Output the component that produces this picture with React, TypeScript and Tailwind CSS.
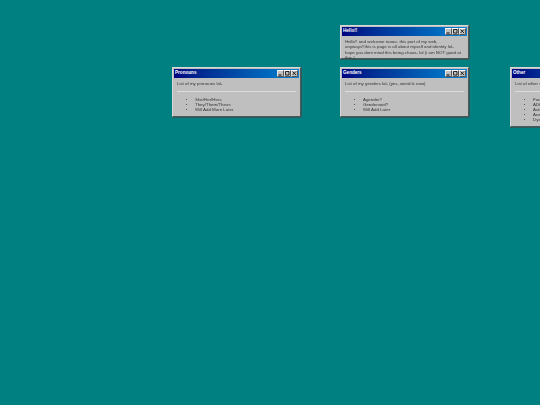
const font = { fontFamily: '"Liberation Sans", Arial, sans-serif' }

function Win({ title, className, children }: { title: string; className: string; children: React.ReactNode }) {
  return (
    <div
      style={font}
      className={`absolute bg-[#bfbfbf] border border-t-[#d8d8d8] border-l-[#d8d8d8] border-r-[#4a5a5a] border-b-[#4a5a5a] p-px shadow-[0_1px_0_#2c5c5c,1px_0_0_#2c5c5c] blur-[0.3px] ${className}`}
    >
      <div className="flex h-[9px] items-center justify-between bg-gradient-to-r from-[#000080] to-[#1084d0] pl-px pr-px">
        <span className="text-[4.6px] leading-none font-bold text-white">{title}</span>
        <div className="flex">
          <TitleButton kind="min" />
          <TitleButton kind="max" />
          <TitleButton kind="close" />
        </div>
      </div>
      {children}
    </div>
  )
}

function TitleButton({ kind }: { kind: 'min' | 'max' | 'close' }) {
  return (
    <svg width="7" height="7" viewBox="0 0 7 7" className={kind === 'close' ? 'ml-[0.5px]' : ''}>
      <rect width="7" height="7" fill="#c0c0c0" />
      <path d="M0 6.5V0.5H6.5" fill="none" stroke="#fff" strokeWidth="1" />
      <path d="M0.5 6.5H6.5V0.5" fill="none" stroke="#555" strokeWidth="1" />
      {kind === 'min' && <path d="M1.5 5H4.5" stroke="#000" strokeWidth="1" />}
      {kind === 'max' && <path d="M1.5 1.5H5V5H1.5Z" fill="none" stroke="#000" strokeWidth="0.8" />}
      {kind === 'close' && <path d="M1.5 1.5L5 5M5 1.5L1.5 5" stroke="#000" strokeWidth="0.8" />}
    </svg>
  )
}

function ListBody({ intro, items }: { intro: string; items: string[] }) {
  return (
    <div className="px-[3px] text-[4.4px] leading-[5px] text-[#333]">
      <p className="mt-[3px] whitespace-nowrap">{intro}</p>
      <div className="mt-[5px] border-t border-t-[#dcdcdc]" />
      <ul className="mt-[5px] list-disc pl-[18px] marker:text-[3.5px]">
        {items.map(item => (
          <li key={item} className="whitespace-nowrap">{item}</li>
        ))}
      </ul>
    </div>
  )
}

export default function App() {
  return (
    <div className="relative h-[405px] w-[540px] overflow-hidden bg-[#008080]">
      <Win title="Hello!!" className="left-[340px] top-[25px] h-[34px] w-[129px]">
        <p className="px-[3px] pt-[3px] text-[4.4px] leading-[5.3px] text-[#333]">
          Hello!! and welcome toooo- this part of my web, anyways!!this is page is all about myself and identity lol- hope you dont mind this being chaos- lol (i am NOT good at this-)
        </p>
      </Win>
      <Win title="Pronouns" className="left-[172px] top-[67px] h-[50px] w-[129px]">
        <ListBody intro="List of my pronouns lol-" items={['She/Her/Hers', 'They/Them/Theirs', 'Will Add More Later']} />
      </Win>
      <Win title="Genders" className="left-[340px] top-[67px] h-[50px] w-[129px]">
        <ListBody intro="List of my genders lol- (yes, weird ik now)" items={['Agender?', 'Gendervoid?', 'Will Add Later']} />
      </Win>
      <Win title="Other" className="left-[510px] top-[67px] h-[60px] w-[129px]">
        <ListBody intro="List of other stuff about me lol-" items={['Furry', 'ADHD', 'Autism', 'Anxiety', 'Dyslexia']} />
      </Win>
    </div>
  )
}
